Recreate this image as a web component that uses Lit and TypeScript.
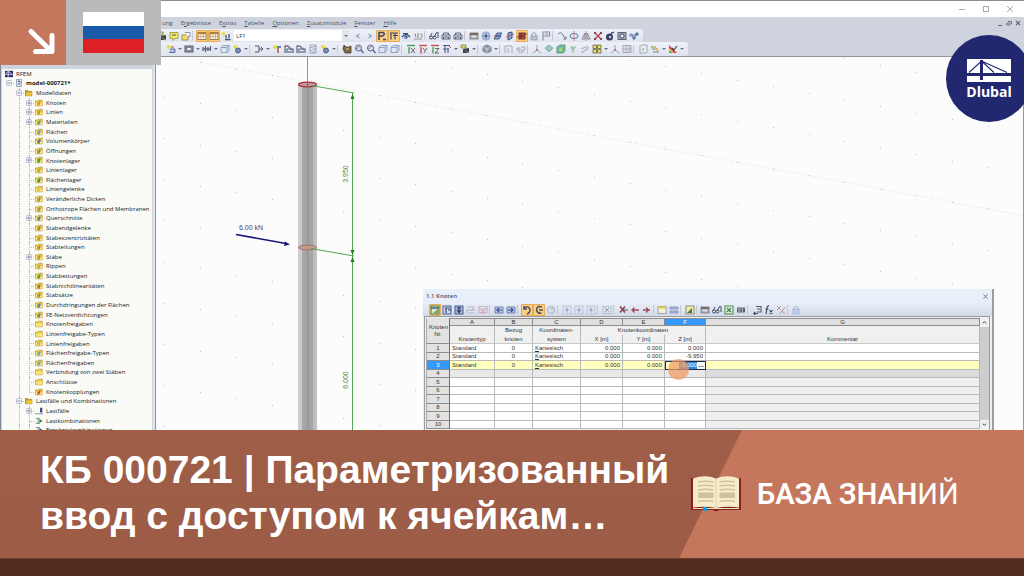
import { LitElement, html, svg, css, nothing } from "lit";
import { customElement, property } from "lit/decorators.js";
import { classMap } from "lit/directives/class-map.js";

const NAVY = "#2c3a66";

/* Glyphs are drawn on a 10 x 10 grid. */
const glyphs: Record<string, unknown> = {
  folder: svg`<path d="M.5 2.500h3l1-1h4.500v7h-8.500z" fill="#f2cf45" stroke="#9c8020" stroke-width=".7"/><path d="M1 4.500h8v3.700h-8z" fill="#fbe67c"/>`,
  folderOpen: svg`<path d="M.5 2h3l1 1h4v5.500h-8z" fill="#c9a21c" stroke="#7d6512" stroke-width=".7"/><path d="M2 4.500h7.500l-1.500 4h-7z" fill="#e8c93c"/>`,
  rfem: svg`<rect y="1" width="10" height="8" fill="#2a2f78"/><path d="M0 5.500h10M4 1v8M1 4l3-2 4 2" stroke="#fff" stroke-width=".9" fill="none"/>`,
  model: svg`<path d="M2 .5h6v9H2z" fill="#dfe6f2" stroke="#66758f" stroke-width=".8"/><path d="M3.500 3q2-1.500 2.500 0t-1 2.500v2" stroke="#22306b" fill="none"/>`,
  load: svg`<path d="M0 8.500h10" stroke="#778" /><path d="M7 1v6M8.500 1v6" stroke="${NAVY}" stroke-width="1.300"/>`,
  combo: svg`<path d="M1 2h5M1 8h5M4 2v6" stroke="#566" fill="none" stroke-width=".9"/><path d="M5.500 2.500l4 2.500-4 2.500z" fill="#1d8a3a"/>`,
  result: svg`<path d="M1 2h5M1 8h5M4 2v6" stroke="#566" fill="none" stroke-width=".9"/><path d="M5.500 2.500l4 2.500-4 2.500z" fill="#2450b0"/>`,
  open: svg`<path d="M1 4h6v5H1z" fill="#f3e05a" stroke="#7c7424" stroke-width=".8"/><path d="M4 1.500h5v4H7" fill="#fff" stroke="#667" stroke-width=".8"/>`,
  note: svg`<path d="M1 1.500h8v6H6l-2 2v-2H1z" fill="#f1e94f" stroke="#8a8430" stroke-width=".8"/><path d="M3 4h4" stroke="#444"/>`,
  table: svg`<rect x="1" y="1.500" width="8" height="7" fill="#fff" stroke="#8a6a2c" stroke-width=".9"/><path d="M1 2.500h8" stroke="#b57a20" stroke-width="1.500"/><path d="M1 5.500h8M4 3v5.500M6.500 3v5.500" stroke="#a98b55" stroke-width=".6"/>`,
  newload: svg`<path d="M4 8.500h5.500M5 7V4M8 7V3" stroke="${NAVY}" stroke-width="1.300"/><circle cx="2.500" cy="2.800" r="1.900" fill="#e6da2c"/>`,
  eye: svg`<path d="M1 6q4-5 8 0" fill="none" stroke="${NAVY}" stroke-width="1.400"/><circle cx="5" cy="6" r="1.900" fill="#3d6fb8"/><path d="M2 2.500h5" stroke="#333"/>`,
  pfoot: svg`<path d="M2 9V1.500h4.500q2 2-1 3.500H2M6 8.500h3" fill="none" stroke="#27335c" stroke-width="1.500"/>`,
  frame: svg`<path d="M1 2h8M2 2v6.500M6 2v6.500M4 4.500h5" fill="none" stroke="#27335c" stroke-width="1.200"/>`,
  values: svg`<path d="M1 4l1.500-1v3M4 3h2L4 6h2M7.500 3h1.500v3H7.500M1 8h8" fill="none" stroke="#777" stroke-width=".8"/>`,
  glasses: svg`<path d="M1 6l2-4M5 6l3-5M9 1v6" stroke="#2d3654" fill="none"/><circle cx="2" cy="6.500" r="1.500" fill="none" stroke="#2d3654"/><circle cx="5.500" cy="6.500" r="1.500" fill="none" stroke="#2d3654"/>`,
  print: svg`<path d="M1 4h8v4H1zM2.500 4V2h5v2M2.500 8V6h5v2" fill="none" stroke="#3b4668" stroke-width=".9"/>`,
  card: svg`<rect x="1" y="2" width="8" height="6" fill="#aeb2ba" stroke="#555" stroke-width=".7"/><path d="M1 3h8" stroke="#5d4632" stroke-width="1.500"/><path d="M3 5.500h4" stroke="#eee"/>`,
  target: svg`<rect x="2" y="2" width="6" height="6" fill="#c7d3ef" stroke="#6d82b8"/><path d="M5 0v10M0 5h10" stroke="#6d82b8" stroke-width=".8"/><circle cx="5" cy="5" r="1.500" fill="${NAVY}"/>`,
  plane: svg`<path d="M2 5l2-3h5L7 5zM1 8l2-3h5L6 8z" fill="#6da3da" stroke="#26406e" stroke-width=".9"/><path d="M1 6l4-4" stroke="#c33" stroke-width=".8"/>`,
  cut: svg`<path d="M3 2l4-1v6L3 9z" fill="#6da3da" stroke="#26406e"/><path d="M1 6l8-3" stroke="#b33" stroke-width=".9"/>`,
  solid: svg`<rect x="2" y="2" width="6" height="6" fill="#c5361f" stroke="#4d1c16"/><path d="M4 2v6M2 5h6M0 6h2M8 3h2" stroke="#2b1a44" stroke-width=".9"/>`,
  lock: svg`<path d="M3 5V3q2-3 4 0v2" fill="none" stroke="#8b93a8"/><rect x="2" y="5" width="6" height="4" fill="#b5bccd" stroke="#858da2" stroke-width=".7"/>`,
  flag: svg`<path d="M2 9.500V1h6.500v4H2M4 3h3" fill="none" stroke="#7b84a0" stroke-width="1.100"/>`,
  move: svg`<path d="M1 3q3-3 5 1t3 4M6.500 8H9V5.500" fill="none" stroke="#5b6684"/>`,
  rotate: svg`<ellipse cx="5" cy="5" rx="4" ry="2.600" fill="none" stroke="#4a6ca8"/><path d="M5 0v10" stroke="#c55" stroke-width=".8"/>`,
  mirror: svg`<path d="M4 2v6H1zM6 2v6h3z" fill="none" stroke="#5d6680" stroke-width=".9"/><path d="M5 0v10" stroke="#c55" stroke-width=".7"/>`,
  cross: svg`<path d="M1.500 1.500l7 7M8.500 1.500l-7 7" stroke="#b8262c" stroke-width="1.300"/><path d="M1 1h2v2H1zM7 1h2v2H7zM1 7h2v2H1zM7 7h2v2H7z" fill="#7c3040"/>`,
  ball: svg`<circle cx="4.500" cy="6" r="3.500" fill="#1f2756"/><path d="M6 3q1-2 3-1.500" stroke="#1f2756" fill="none" stroke-width="1.400"/><circle cx="5" cy="6" r="1.200" fill="#cdd5ec"/>`,
  camera: svg`<rect x="1" y="1.500" width="8" height="7" fill="#a6adb8" stroke="#4c5468"/><circle cx="5" cy="5" r="2.200" fill="#dde6f2" stroke="#222c50"/>`,
  links: svg`<path d="M2 4l3 3M5 7l3-4M2 4h6" stroke="#4c659f"/><circle cx="2" cy="4" r="1.700" fill="#6f8cc4"/><circle cx="8" cy="3" r="1.700" fill="#4c659f"/><circle cx="5" cy="7" r="1.700" fill="#4c659f"/>`,
  addnode: svg`<path d="M3 8.500h6V5H4" fill="#a9bde2" stroke="#41578c" stroke-width=".9"/><circle cx="2.600" cy="2.800" r="1.900" fill="#e6da2c"/><path d="M5 3h3" stroke="#b33"/>`,
  box: svg`<rect x="1" y="2" width="8" height="6" fill="#8e97a8" stroke="#414a62"/><rect x="3" y="3.500" width="4" height="3" fill="#fff" stroke="#414a62" stroke-width=".6"/>`,
  beam: svg`<path d="M1 3v4M3.500 2v6M6 3v4M8.500 2v5M1 5h8" stroke="#4b5674" stroke-width="1.300"/>`,
  cube: svg`<path d="M1 3.500l2-2h6v5l-2 2H1zM1 3.500h6v5M7 3.500l2-2" fill="#dce6f6" stroke="#6f84b0" stroke-width=".8"/>`,
  flow: svg`<path d="M1 2h4v6H1M5 5h4M7 3l2 2-2 2" fill="none" stroke="#3d4762"/>`,
  pin: svg`<path d="M6 2v7" stroke="#c0392b" stroke-width="1.500"/><circle cx="3" cy="3" r="2" fill="#e6da2c"/><path d="M5 2h4v2H5" fill="#5e77b0"/>`,
  truss: svg`<path d="M1 9V2h3l4 4M3 9V5h6v4M5 9V7M7 9V7" fill="none" stroke="#4b5674" stroke-width="1.200"/><path d="M1 2h3" stroke="#c55" stroke-width="1.200"/>`,
  hatch: svg`<path d="M2 1h6v8H2zM2 4l6-2M2 7l6-3M4 9l4-3" fill="none" stroke="#8793b3" stroke-width=".9"/>`,
  gear: svg`<circle cx="3" cy="3" r="2" fill="#e6da2c"/><circle cx="6" cy="6.500" r="2.500" fill="#6782b4" stroke="#344a7c"/>`,
  cat: svg`<path d="M2 1l2 2h3l2-1v7H3L1 5z" fill="#70572c" stroke="#33291c" stroke-width=".8"/><path d="M4 5h3" stroke="#dcc68d"/>`,
  zoom: svg`<circle cx="4.500" cy="4" r="3" fill="#cfe0f4" stroke="#3f5388"/><path d="M7 6l2.500 3" stroke="#3f5388" stroke-width="1.400"/><path d="M2.500 5l3-3" stroke="#c33"/>`,
  axisx: svg`<path d="M1 1.500h8" stroke="#2b9a4a" stroke-width="1.400"/><path d="M3 3v6.500" stroke="#2b9a4a" stroke-width="1.400"/><path d="M5 4l4 5M9 4L5 9" stroke="#444" stroke-width=".9"/>`,
  axisy: svg`<path d="M1 1.500h8" stroke="#c33b3b" stroke-width="1.400"/><path d="M3 3v6.500" stroke="#c33b3b" stroke-width="1.400"/><path d="M5 4l2 2.500M9 4L6 9" stroke="#444" stroke-width=".9"/>`,
  axisz: svg`<path d="M1 1.500h8" stroke="#c33b3b" stroke-width="1.400"/><path d="M3 3v6.500" stroke="#2b9a4a" stroke-width="1.400"/><path d="M5 4.500h4L5 9h4" fill="none" stroke="#444" stroke-width=".9"/>`,
  view: svg`<path d="M1 1.500h7M1 5h6M3 1.500V9M6 4v5" stroke="#3c4b80" stroke-width="1.100"/><path d="M7 2l2 2" stroke="#c33"/>`,
  ylwedge: svg`<path d="M1 1h5v3H1z" fill="#e8df38" stroke="#555" stroke-width=".7"/><path d="M3 5l6 4V4zM3 5v4h5" fill="#2a2a2a"/>`,
  sphere: svg`<path d="M5 1l4 2v4L5 9 1 7V3z" fill="#8495a4" stroke="#4c5b6b" stroke-width=".8"/><path d="M1 3l4 2 4-2M5 5v4" stroke="#d5dde4" fill="none" stroke-width=".7"/>`,
  arch: svg`<path d="M1 9V2h7v7M4 9V4" fill="none" stroke="#98a0b0"/>`,
  dims: svg`<path d="M1 4h3v2H1zM5 3h4v3H5M2 8h6" fill="none" stroke="#98a0b0"/>`,
  tripod: svg`<path d="M5 1v5M5 6L1 9M5 6l4 3" stroke="#8c97ac" fill="none"/><circle cx="5" cy="6" r="1" fill="#b55"/>`,
  surface: svg`<path d="M1 4l4-3 4 3-4 4z" fill="#78c8d4" stroke="#6685b4" stroke-width=".7"/><path d="M3 4l2-1 2 1-2 1.500z" fill="#e8b83a"/>`,
  greencube: svg`<path d="M1 3l3-2h5v6L7 9H1z" fill="#63b887" stroke="#487b70" stroke-width=".8"/><circle cx="4.500" cy="5.500" r="1.500" fill="#c8d94e"/>`,
  tree: svg`<path d="M5 9V3M2 3h6M3 5h4" stroke="#7fae8b" stroke-width="1.100"/>`,
  steps: svg`<path d="M1 8h3V6h3V4h2M1 5l7-3" fill="none" stroke="#9ba3b2"/>`,
  tiles: svg`<path d="M1 1h3.500v3.500H1zM5.500 1H9v3.500H5.500zM1 5.500h3.500V9H1zM5.500 5.500H9V9H5.500z" fill="#eadf55" stroke="#57502a" stroke-width=".8"/>`,
  grid: svg`<path d="M1 1.500h8v7H1zM1 5h8M4 1.500v7M7 1.500v7" fill="none" stroke="#8e97a8" stroke-width=".9"/>`,
  doc: svg`<path d="M2 2l2-1h5v7l-1 1H2z" fill="#e9edf4" stroke="#98a0b0"/><path d="M4 4h2v3H4z" fill="#a6c7a3"/>`,
  wand: svg`<path d="M1 3h5M2 5h6M3 8h6" stroke="#66708c"/><path d="M3 2l5 5" stroke="#dcc530" stroke-width="1.700"/>`,
  rainbow: svg`<path d="M1 1v8h8z" fill="#d8302c"/><path d="M1 4v5h5z" fill="#f0d62e"/><path d="M1 6.500V9h4z" fill="#2fa24a"/><path d="M4 4l2 2 3-4" fill="none" stroke="#222" stroke-width="1.100"/>`,
  less: svg`<path d="M6.500 3L3.500 5l3 2" fill="none" stroke="#7f90ba" stroke-width="1.100"/>`,
  more: svg`<path d="M3.500 3l3 2-3 2" fill="none" stroke="#7f90ba" stroke-width="1.100"/>`,
  picture: svg`<rect x="1" y="1" width="8" height="8" fill="#d9efcf" stroke="#2c6b3a"/><path d="M1 3h8" stroke="#2a4f8c" stroke-width="1.500"/><path d="M3 8l5-4v4z" fill="#59a851"/>`,
  insert: svg`<rect x="1" y="1" width="8" height="8" fill="#cfdcf2" stroke="#33477c"/><path d="M3 3h5M4 3v5M6 5h3" stroke="#1b2a5e" stroke-width="1.200"/>`,
  below: svg`<rect x="1" y="1" width="8" height="8" fill="#9fb4dc" stroke="#33477c"/><path d="M5 2v5M3 5l2 2.500L7 5M3 3h4" stroke="#141f4a" stroke-width="1.200" fill="none"/>`,
  dimmed: svg`<path d="M1 2h8M1 8V5h8M3 8h5" fill="none" stroke="#aeb4c8" stroke-width="1.200"/><path d="M5 6l3-3" stroke="#d6a0a8"/>`,
  dimmedx: svg`<path d="M1 1.500h8v6H1zM1 4h8" fill="none" stroke="#c9aebb" stroke-width="1.200"/><path d="M3 4l4 5M7 4L3 9" stroke="#d79aa0"/>`,
  left: svg`<path d="M1 2h8v6H1z" fill="#b4c4e4" stroke="#5a6c9c" stroke-width=".9"/><path d="M8 5H3M5 3L3 5l2 2" fill="none" stroke="#1c3a8a" stroke-width="1.200"/>`,
  right: svg`<path d="M1 2h8v6H1z" fill="#b4c4e4" stroke="#5a6c9c" stroke-width=".9"/><path d="M2 5h5M5 3l2 2-2 2" fill="none" stroke="#1c3a8a" stroke-width="1.200"/>`,
  redo: svg`<path d="M2 3q5-3 6 2 0 3-3 4M2 1v3h3" fill="none" stroke="#3a3f5c" stroke-width="1.500"/>`,
  undo: svg`<path d="M8 2Q3 0 2.500 5q1 4 5 3M5 5h4" fill="none" stroke="#3a3f5c" stroke-width="1.500"/>`,
  refresh: svg`<circle cx="5" cy="5" r="3.400" fill="none" stroke="#a9b2c4" stroke-width="1.100"/><path d="M7 1v3H4" fill="none" stroke="#a9b2c4"/>`,
  pale: svg`<rect x="1" y="1" width="8" height="8" fill="#dfe5f2" stroke="#b3bdd4" stroke-width=".9"/><path d="M5 2.500v5M3 5h4" stroke="#8f9fc6" stroke-width="1.200"/>`,
  palex: svg`<rect x="1" y="1.500" width="8" height="7" fill="#dfe4ee" stroke="#b3bacb" stroke-width=".9"/><path d="M3 3l4 4M7 3L3 7" stroke="#8b97b4"/>`,
  delx: svg`<path d="M2 1.500l5 6M7 1.500l-5 6" stroke="#8c2232" stroke-width="1.500"/><path d="M5 5h5" stroke="#444"/>`,
  delleft: svg`<path d="M9 5H2M4.500 2.500L2 5l2.500 2.500" fill="none" stroke="#9c3040" stroke-width="1.300"/>`,
  delright: svg`<path d="M1 5h7M4 2.500L6.500 5 4 7.500" fill="none" stroke="#9c3040" stroke-width="1.300"/>`,
  ytable: svg`<rect x="1" y="1.500" width="8" height="7" fill="#f8f6d2" stroke="#7c86a0" stroke-width=".8"/><path d="M1 2.500h8" stroke="#d6cc34" stroke-width="2"/>`,
  btable: svg`<path d="M1 2h8v2H1zM1 6h8v2H1z" fill="#a9b0e0" stroke="#7780b8" stroke-width=".8"/>`,
  excel: svg`<rect x="1" y="1" width="8" height="8" fill="#e4f2e0" stroke="#3d8a46" stroke-width="1.100"/><path d="M3 3l4 4M7 3L3 7" stroke="#2c7a38" stroke-width="1.300"/>`,
  calc: svg`<path d="M1 2.500h8v5H1z" fill="#4c5260"/><path d="M2 4h3M2 6h3M6.500 3v4" stroke="#dde" stroke-width=".7"/>`,
  chart: svg`<rect x="1" y="1" width="8" height="8" fill="#f3ee9a" stroke="#68705c" stroke-width=".8"/><path d="M2 8l5-5v5z" fill="#3a5a3c"/>`,
  chain: svg`<path d="M4 1.500h5V7H5M1 8.500h5M2 7l2 1.500L2 10M5 4h3" fill="none" stroke="#3f465c" stroke-width="1.100"/>`,
  fx: svg`<path d="M5 1q-1.500-.5-2 2L2 9M1.500 4h3M5.500 5l3 4M8.500 5l-3 4" fill="none" stroke="#222a44" stroke-width="1.100"/>`,
  xdel: svg`<path d="M1 1l4 4M5 1L1 5M9 2L4 9M6 6l3 3" stroke="#c08796" stroke-width="1"/>`,
  padlock: svg`<path d="M3 5V3q2-3 4 0v2" fill="none" stroke="#9fb0d4" stroke-width="1.100"/><rect x="2" y="4.500" width="6" height="4.500" fill="#c0cdea" stroke="#93a5cf" stroke-width=".7"/>`,
};

const icon = (name: string) =>
  html`<svg class="icon" viewBox="0 0 10 10" aria-hidden="true">${glyphs[name] ?? nothing}</svg>`;

/* Toolbar notation: "|" separator, "name*" active, "name+" with drop arrow. */
const MAIN_BAR_A = "ylwedge note open | table* table* newload".split(" ");
const MAIN_BAR_B =
  "less more pfoot* frame* eye values | glasses print print | card target plane cut solid* lock flag | move rotate mirror cross ball camera links".split(" ");
const VIEW_BAR =
  "addnode+ box+ beam+ cube gear+ | flow+ pin truss truss hatch gear+ | cat zoom zoom cube cube | axisx axisy axisz view+ ylwedge+ | sphere+ | arch dims | tripod surface greencube tree steps tiles+ tripod grid | doc wand+ rainbow+".split(" ");
const TABLE_BAR =
  "picture* insert below dimmed dimmedx | left right | redo* undo* refresh | pale pale pale | palex | delx delleft delright ! ytable btable | chart ! card glasses excel calc | chain fx xdel ! padlock".split(" ");

const tools = (items: string[]) =>
  items.map((item) => {
    if (item === "|") return html`<span class="sep"></span>`;
    if (item === "!") return html`<span class="sep slim"></span>`;
    const name = item.replace(/[*+]$/, "");
    return html`<button class=${classMap({ tool: true, active: item.endsWith("*"), drop: item.endsWith("+") })} aria-label=${name}>${icon(name)}</button>`;
  });

const shared = css`
  * { box-sizing: border-box; }
  button { appearance: none; border: 0; margin: 0; padding: 0; background: none; font: inherit; color: inherit; }
  .icon { display: block; width: 10px; height: 10px; flex: none; opacity: .88; }
  .tool { position: relative; width: 12px; height: 12px; display: flex; align-items: center; padding: 0 1px; flex: none; border-radius: 1px; }
  .tool.active { background: #fbcf86; box-shadow: inset 0 0 0 1px #e5ad59; }
  .tool.drop { width: 18px; }
  .tool.drop::after { content: ""; margin-left: 2px; border: 2px solid transparent; border-top-color: #6b7183; border-bottom: 0; flex: none; }
  .sep { width: 4px; height: 9px; border-left: 1px solid #c3c8d4; flex: none; }
  .sep.slim { width: 3px; }
`;

interface Row { text: string; level: number; icon: string; mark?: string; box?: "+" | "-"; last?: boolean; bold?: boolean; }
const leaf = (text: string, mark = "", box?: "+"): Row => ({ text, level: 3, icon: "folder", mark, box });
const ROWS: Row[] = [
  { text: "RFEM", level: 0, icon: "rfem" },
  { text: "model-000721*", level: 1, icon: "model", box: "-", bold: true, last: true },
  { text: "Modelldaten", level: 2, icon: "folderOpen", box: "-" },
  leaf("Knoten", "#d9822b", "+"), leaf("Linien", "#b08a1c", "+"), leaf("Materialien", "#3f8f8a", "+"),
  leaf("Flächen", "#5a86c4"), leaf("Volumenkörper", "#2c5a9e"), leaf("Öffnungen", "#6b7282"),
  leaf("Knotenlager", "#1f8c3a", "+"), leaf("Linienlager", "#b0912c"), leaf("Flächenlager", "#2c7a4a"),
  leaf("Liniengelenke", "#d8b860"), leaf("Veränderliche Dicken", "#8a7a50"), leaf("Orthotrope Flächen und Membranen", "#a08048"),
  leaf("Querschnitte", "#3f62c4", "+"), leaf("Stabendgelenke", "#a06a30"), leaf("Stabexzentrizitäten", "#a8872c"),
  leaf("Stabteilungen", "#a8702c"), leaf("Stäbe", "#a8872c", "+"), leaf("Rippen", "#b89a50"),
  leaf("Stabbettungen", "#3c8a4a"), leaf("Stabnichtlinearitäten", "#8c5a20"), leaf("Stabsätze", "#98762c"),
  leaf("Durchdringungen der Flächen", "#3c6ab0"), leaf("FE-Netzverdichtungen", "#5a6c80"), leaf("Knotenfreigaben"),
  leaf("Linienfreigabe-Typen"), leaf("Linienfreigaben", "#c4a860"), leaf("Flächenfreigabe-Typen", "#5c94cc"),
  leaf("Flächenfreigaben", "#5c94cc"), leaf("Verbindung von zwei Stäben"), leaf("Anschlüsse"),
  { ...leaf("Knotenkopplungen", "#c03a20"), last: true },
  { text: "Lastfälle und Kombinationen", level: 2, icon: "folderOpen", box: "-" },
  { text: "Lastfälle", level: 3, icon: "load", box: "+" },
  { text: "Lastkombinationen", level: 3, icon: "combo" },
  { text: "Ergebniskombinationen", level: 3, icon: "result" },
];

@customElement("project-tree")
class ProjectTree extends LitElement {
  static styles = [shared, css`
    :host { display: block; overflow: hidden; background: #fafaf7; color: #222; font: 6px/10px "Open Sans", "Noto Sans", sans-serif; }
    .list { margin: 0; padding: 0; list-style: none; display: grid; grid-auto-rows: 1fr; height: calc(100% + 5px); }
    .row { display: flex; align-items: center; padding-left: 2px; white-space: nowrap; min-height: 0; }
    .guide { align-self: stretch; width: 10px; flex: none; position: relative; display: flex; align-items: center; justify-content: center; }
    .guide.line::before { content: ""; position: absolute; left: 5px; top: 0; bottom: 0; border-left: 1px dotted #b9b9b9; }
    .guide.end::before { bottom: 50%; }
    .guide.arm::after { content: ""; position: absolute; left: 5px; right: 0; top: 50%; border-top: 1px dotted #b9b9b9; }
    .box { position: relative; z-index: 1; width: 6px; height: 6px; }
    .label { margin-left: 2px; }
    .bold { font-weight: 700; }
    .icon { width: 8px; height: 8px; margin: 0 1px; opacity: 1; }
  `];
  render() {
    return html`<ul class="list" role="tree">${ROWS.map((r) => html`
      <li class="row" role="treeitem">
        ${r.level > 1 ? html`<span class="guide"></span>` : nothing}
        ${r.level > 2 ? html`<span class="guide line"></span>` : nothing}
        ${r.level > 0 ? html`<span class=${classMap({ guide: true, line: r.level > 1, end: !!r.last, arm: true })}>
          ${r.box ? html`<svg class="box" viewBox="0 0 6 6"><rect x=".5" y=".5" width="5" height="5" rx="1" fill="#f4f5f8" stroke="#a9adb8" stroke-width=".8"/><path d=${r.box === "+" ? "M1.500 3h3M3 1.500v3" : "M1.500 3h3"} stroke="#5b6fa8" stroke-width=".8"/></svg>` : nothing}
        </span>` : nothing}
        <svg class="icon" viewBox="0 0 10 10">${glyphs[r.icon]}${r.mark ? svg`<path d="M3 4h2V3h2v3H6v2H3z" fill=${r.mark} opacity=".85"/>` : nothing}</svg>
        <span class=${classMap({ label: true, bold: !!r.bold })}>${r.text}</span>
      </li>`)}</ul>`;
  }
}

@customElement("model-view")
class ModelView extends LitElement {
  static styles = css`
    :host { display: block; background: #fcfcfc; overflow: hidden; }
    .canvas { display: block; width: 100%; height: 100%; font: 7px "Liberation Sans", Arial, sans-serif; }
  `;
  render() {
    const dots: unknown[] = [];
    for (let i = 0; i < 40; i++) {
      const x = Math.round(8.3 + i * 35.8);
      const first = (39.7 + i * 6.65) % 41.2;
      for (let k = 0; k < 12; k++) dots.push(svg`<rect x=${x} y=${Math.round(first + k * 41.2)} width="1" height="1"/>`);
    }
    return html`<svg class="canvas">
      <defs><linearGradient id="steel">
        <stop offset="0" stop-color="#cdcdcd"/><stop offset=".2" stop-color="#cbcbcb"/><stop offset=".22" stop-color="#a9a9a9"/>
        <stop offset=".48" stop-color="#a2a4a3"/><stop offset=".5" stop-color="#909694"/><stop offset=".54" stop-color="#9fa1a0"/>
        <stop offset=".8" stop-color="#a9a9a9"/><stop offset=".82" stop-color="#bcbcbc"/><stop offset="1" stop-color="#c4c4c4"/>
      </linearGradient></defs>
      <path d="M44 5L1400 258" stroke="#efefef" stroke-dasharray="5 2"/>
      <g fill="#c2c2c2">${dots}</g>
      <path d="M151.500 0v27" stroke="#69a99d"/>
      <rect x="142" y="27" width="19" height="600" fill="url(#steel)"/>
      <ellipse cx="151.500" cy="27.500" rx="9" ry="2.400" fill="#b9a3a3" stroke="#b03038" stroke-width="1.300"/>
      <circle cx="151.500" cy="27.500" r="1" fill="#d02828"/>
      <ellipse cx="151.500" cy="190.500" rx="9" ry="2.400" fill="#b5a09c" stroke="#b86a66"/>
      <circle cx="151.500" cy="190.500" r="1.200" fill="#e8883a"/>
      <g stroke="#56a856" fill="none"><path d="M155 28.500L198 36M155 191.500L198 199M196.500 36v600"/></g>
      <g fill="#17801f"><path d="M196.500 37l2 5h-4zM196.500 198l2-5h-4zM196.500 200l2 5h-4z"/></g>
      <g fill="#3f8f3f" text-anchor="middle">
        <text transform="translate(192 117) rotate(-90)">3.950</text>
        <text transform="translate(192 323) rotate(-90)">6.000</text>
      </g>
      <text x="83" y="173" fill="#45457c">6.00 kN</text>
      <path d="M80 177.500l50 9" stroke="#16167c" stroke-width="1.600"/><path d="M134 187.500l-6 1.500 1-4.500z" fill="#16167c"/>
    </svg>`;
  }
}

interface Node { z: string; x: string; y: string; }
const NODES: Node[] = [
  { x: "0.000", y: "0.000", z: "0.000" },
  { x: "0.000", y: "0.000", z: "-9.950" },
  { x: "0.000", y: "0.000", z: "-6.000" },
];

@customElement("node-table")
class NodeTable extends LitElement {
  @property({ type: Number }) current = 3;
  static styles = [shared, css`
    :host { display: flex; flex-direction: column; background: #e9eff8; border-right: 2px solid #9b9ba4; color: #333; }
    .title { display: flex; justify-content: space-between; align-items: center; height: 14px; padding: 0 3px; font: 600 6px/8px "Open Sans", "Noto Sans", sans-serif; color: #4b5265; }
    .close { width: 7px; height: 7px; }
    .bar { display: flex; align-items: center; height: 13px; padding: 0 6px; background: linear-gradient(#e9eff8, #d3dae8); }
    .sheet { display: grid; grid-template-columns: 1fr 9px; margin: 0 2px 0 1px; padding: 1px 0 1px 1px; border: 1px solid #9a9ca3; border-bottom: 0; background: #f0f0f0; }
    .data { width: 100%; table-layout: fixed; border-collapse: separate; border-spacing: 0; font: 6px/7px "Liberation Sans", Arial, sans-serif; }
    th, td { padding: 0 2px; font-weight: 400; overflow: hidden; white-space: nowrap; border-right: 1px solid #b9b9b9; }
    .c-n { width: 24px; } .c-a { width: 45px; } .c-b { width: 38px; } .c-c { width: 48px; } .c-d { width: 42px; } .c-f { width: 41px; }
    .letters th { height: 8px; background: #dfdfdf; border-right-color: #8c8c8c; border-bottom: 1px solid #8c8c8c; border-top: 1px solid #8c8c8c; line-height: 6px; }
    .letters .sel { background: #3399ff; color: #fff; }
    .heads th { height: 9px; background: #f0f0f0; }
    .heads .low { border-bottom: 1px solid #c9c9c9; }
    .letters .corner, .num { background: #e2e2e2; border: 0; border-right: 1px solid #6f6f6f; border-bottom: 1px solid #8c8c8c; text-align: center; }
    .letters .corner { line-height: 7px; white-space: normal; border-left: 1px solid #aaa; }
    .num { border-left: 1px solid #aaa; }
    td, .num { height: 8px; }
    .entry:nth-child(odd) td, .entry:nth-child(odd) .num { height: 9px; }
    td { background: #fff; border-bottom: 1px solid #b9b9b9; }
    .mid { text-align: center; } .end { text-align: right; }
    .now td { background: #ffffbe; }
    .now .num { background: #3399ff; color: #fff; }
    .next td { background: #e9e9e9; } .next .note { background: #dcdcdc; }
    .idle .note { background: #efefef; }
    .now .edit { padding: 0; border: 1px solid #22264a; vertical-align: top; }
    .cell { display: flex; justify-content: flex-end; height: 7px; }
    .value { width: 18px; height: 7px; border: 0; padding: 0; margin: 0; background: #2f86dd; color: #fff; font: inherit; line-height: 7px; text-align: right; outline: 0; flex: none; }
    .spin { width: 8px; height: 7px; background: linear-gradient(#f6f6f6 0 3px, #9da3ae 3px 4px, #f6f6f6 4px); border: 1px solid #fff; flex: none; }
    .scroll { display: flex; flex-direction: column; background: #cdcdcd; }
    .arrow { height: 9px; background: #f0f0f0; display: grid; place-items: center; }
    .arrow svg { width: 5px; height: 5px; display: block; }
    .fill { flex: 1; }
    .touch { position: absolute; left: 245px; top: 70px; width: 21px; height: 21px; border-radius: 50%; background: #ef9a62; opacity: .72; pointer-events: none; }
  `];
  private entry(n: number) {
    const node = NODES[n - 1];
    const now = n === this.current;
    return html`<tr class=${classMap({ entry: true, now, next: n === 4, idle: n > 4 })}>
      <th class="num" scope="row">${n}</th>
      <td>${node ? "Standard" : ""}</td>
      <td class="mid">${node ? "0" : ""}</td>
      <td>${node ? html`<u>K</u>artesisch` : ""}</td>
      <td class="end">${node?.x ?? ""}</td>
      <td class="end">${node?.y ?? ""}</td>
      ${now
        ? html`<td class="edit"><div class="cell"><input class="value" aria-label="Z [m]" .value=${node.z}><button class="spin" aria-label="Z"></button></div></td>`
        : html`<td class="end">${node?.z ?? ""}</td>`}
      <td class="note"></td>
    </tr>`;
  }
  render() {
    return html`
      <div class="title"><span>1.1 Knoten</span>
        <button class="close" aria-label="Schließen"><svg class="icon close" viewBox="0 0 10 10"><path d="M2 2l6 6M8 2L2 8" stroke="#4a5065" stroke-width="1.200"/></svg></button></div>
      <div class="bar">${tools(TABLE_BAR)}</div>
      <div class="sheet">
        <table class="data">
          <colgroup><col class="c-n"><col class="c-a"><col class="c-b"><col class="c-c"><col class="c-d"><col class="c-d"><col class="c-f"><col></colgroup>
          <thead>
            <tr class="letters"><th class="corner" rowspan="3">Knoten<br>Nr.</th>
              ${"ABCDEFG".split("").map((c) => html`<th class=${classMap({ sel: c === "F" })}>${c}</th>`)}</tr>
            <tr class="heads"><th></th><th>Bezug</th><th>Koordinaten-</th><th colspan="3">Knotenkoordinaten</th><th></th></tr>
            <tr class="heads">${["Knotentyp", "knoten", "system", "X [m]", "Y [m]", "Z [m]", "Kommentar"].map((t) => html`<th class="low">${t}</th>`)}</tr>
          </thead>
          <tbody>${[1, 2, 3, 4, 5, 6, 7, 8, 9, 10].map((n) => this.entry(n))}</tbody>
        </table>
        <div class="scroll">
          <button class="arrow" aria-label="Nach oben"><svg viewBox="0 0 6 6"><path d="M1 4l2-2 2 2" fill="none" stroke="#444" stroke-width="1.200"/></svg></button>
          <span class="fill"></span>
          <button class="arrow" aria-label="Nach unten"><svg viewBox="0 0 6 6"><path d="M1 2l2 2 2-2" fill="none" stroke="#444" stroke-width="1.200"/></svg></button>
        </div>
      </div>
      <span class="touch"></span>`;
  }
}

const MENU: [string, string, string][] = [
  ["", "", "ung"], ["E", "r", "gebnisse"], ["E", "x", "tras"], ["", "T", "abelle"], ["", "O", "ptionen"],
  ["", "Z", "usatzmodule"], ["", "F", "enster"], ["", "H", "ilfe"],
];

@customElement("rfem-window")
class RfemWindow extends LitElement {
  static styles = [shared, css`
    :host { display: grid; grid-template-rows: 16px 12px 28px minmax(0, 1fr); background: #cfd3de; border-top: 1px solid #8c8b92; font: 6px/10px "Open Sans", "Noto Sans", sans-serif; color: #4a5060; overflow: hidden; }
    .caption { display: flex; justify-content: flex-end; align-items: center; gap: 14px; padding-right: 9px; background: #fff; }
    .caption svg { display: block; width: 10px; height: 10px; }
    .menu { display: flex; justify-content: space-between; align-items: center; padding: 0 2px 0 162px; }
    .entries { display: flex; gap: 8px; }
    .child { display: flex; }
    .child svg { display: block; width: 9px; height: 8px; }
    .bars { display: flex; flex-direction: column; align-items: flex-start; border-bottom: 1px solid #8f939c; }
    .bar { display: flex; align-items: center; height: 13px; padding: 0 3px 0 156px; border-radius: 0 3px 3px 0; background: linear-gradient(#eef1f8, #dfe3ee); }
    .bar.view { padding-left: 165px; height: 14px; }
    .case { width: 116px; height: 11px; padding: 0 2px; margin: 0; border: 0; appearance: none; font: inherit; color: #333; background: linear-gradient(#e2e5ee, #e2e5ee) right / 8px 100% no-repeat #fff; }
    .combo { position: relative; display: flex; margin: 0 2px; }
    .combo::after { content: ""; position: absolute; right: 2px; top: 5px; border: 2px solid transparent; border-top-color: #6b7183; border-bottom: 0; }
    .body { display: grid; grid-template-columns: 156px minmax(0, 1fr); border-right: 1px solid #8b9a9a; min-height: 0; }
    .side { display: grid; padding: 12px 4px 0 2px; background: linear-gradient(90deg, #7f8a99 0 1px, #cdd4e0 1px 153px, #dfe4ec 153px 155px, #8e949f 155px); min-height: 0; }
    .work { position: relative; min-height: 0; }
    .scene { width: 100%; height: 100%; }
    .panel { position: absolute; left: 267px; right: 29px; bottom: 0; }
  `];
  render() {
    return html`
      <div class="caption">
        <button aria-label="Minimieren"><svg viewBox="0 0 10 10"><path d="M2 5.500h6" stroke="#aaa"/></svg></button>
        <button aria-label="Maximieren"><svg viewBox="0 0 10 10"><rect x="2.500" y="2.500" width="5" height="5" fill="none" stroke="#aaa"/></svg></button>
        <button aria-label="Schließen"><svg viewBox="0 0 10 10"><path d="M2 2l6 6M8 2L2 8" stroke="#aaa"/></svg></button>
      </div>
      <div class="menu">
        <nav class="entries">${MENU.map(([a, k, b]) => html`<button>${a}<u>${k}</u>${b}</button>`)}</nav>
        <div class="child">
          <button aria-label="Minimieren"><svg viewBox="0 0 9 8"><path d="M3 6.500h4" stroke="#667"/></svg></button>
          <button aria-label="Wiederherstellen"><svg viewBox="0 0 9 8"><path d="M3 6V4h3v2zM4 2.500h3.500V5" fill="none" stroke="#667" stroke-width=".9"/></svg></button>
          <button aria-label="Schließen"><svg viewBox="0 0 9 8"><path d="M3 2l4 4M7 2L3 6" stroke="#667" stroke-width="1.100"/></svg></button>
        </div>
      </div>
      <div class="bars">
        <div class="bar">${tools(MAIN_BAR_A)}
          <label class="combo"><select class="case" aria-label="Lastfall"><option>LF1</option></select></label>
          ${tools(MAIN_BAR_B)}</div>
        <div class="bar view">${tools(VIEW_BAR)}</div>
      </div>
      <div class="body">
        <div class="side"><project-tree></project-tree></div>
        <div class="work"><model-view class="scene"></model-view><node-table class="panel"></node-table></div>
      </div>`;
  }
}

@customElement("app-root")
class AppRoot extends LitElement {
  static styles = css`
    * { box-sizing: border-box; }
    :host { display: grid; grid-template-rows: minmax(0, 1fr) auto 18px; height: 100vh; overflow: hidden; font-family: "Liberation Sans", Arial, sans-serif; }
    .stage { position: relative; display: grid; min-height: 0; overflow: hidden; }
    .window { min-height: 0; }
    .badges { position: absolute; left: 0; top: 0; display: flex; height: 65px; }
    .go { width: 66px; background: #c4775d; }
    .go svg { display: block; width: 66px; height: 65px; }
    .lang { width: 95px; padding: 12px 17px; background: #bababa; }
    .tricolor { height: 41px; background: linear-gradient(#fff 0 34%, #1b5aa8 34% 67%, #dd2026 67%); }
    .brand { position: absolute; right: -8px; top: 35px; width: 86px; height: 87px; border-radius: 50%; background: #212870; color: #fff; display: flex; flex-direction: column; align-items: center; padding-top: 24px; font: 700 14px/20px "Open Sans", "Noto Sans", sans-serif; }
    .brand svg { display: block; width: 44px; height: 23px; flex: none; }
    .banner { display: grid; grid-template-columns: 679fr 345fr; min-height: 128px; background: linear-gradient(#9f5e47, #9d5c46); color: #fff; }
    .headline { margin: 0; padding: 17px 0 19px 40px; font-size: 39px; line-height: 46px; font-weight: 700; white-space: nowrap; }
    .topic { display: flex; align-items: center; gap: 16px; padding-left: 12px; background: linear-gradient(to bottom right, transparent 0 0, #c4775d 0); }
    .topic { position: relative; background: none; }
    .topic::before { content: ""; position: absolute; inset: 0; background: #c4775d; clip-path: polygon(63px 0, 100% 0, 100% 100%, 0 100%); }
    .book { position: relative; display: block; width: 50px; height: 36px; flex: none; }
    .kb { position: relative; font: 600 29px/36px Roboto, "Noto Sans", sans-serif; white-space: nowrap; }
    .thin { font-weight: 400; }
    .foot { background: #522b1f; border-top: 1px solid #6a3a2b; }
  `;
  render() {
    return html`
      <section class="stage">
        <rfem-window class="window"></rfem-window>
        <div class="badges">
          <div class="go"><svg viewBox="0 0 66 65"><path d="M31 31.500L51 51M35.500 51.500H52V35.500" fill="none" stroke="#fff" stroke-width="5" stroke-linecap="round" stroke-linejoin="round"/></svg></div>
          <div class="lang"><div class="tricolor" role="img" aria-label="Русский"></div></div>
        </div>
        <div class="brand">
          <svg viewBox="0 0 44 23"><path d="M0 0h44v14H0zM0 17h44v6H0z" fill="#fff"/><path d="M2 13.500L14.500 2 27 13.500M14.500 2L40 13.500" fill="none" stroke="#212870" stroke-width="1.100"/><path d="M14.500 1v20" stroke="#212870" stroke-width="3"/></svg>
          <span>Dlubal</span>
        </div>
      </section>
      <section class="banner">
        <h1 class="headline">КБ 000721 | Параметризованный<br>ввод с доступом к ячейкам…</h1>
        <div class="topic">
          <svg class="book" viewBox="0 0 50 36">
            <path d="M0 2h50v32H28q-3 2.500-6 0H0z" fill="#8c2019"/>
            <path d="M2 2.500Q14-2 25 2.500 36-2 48 2.500V31.500q-12-1.500-23 .500Q14 30 2 31.500z" fill="#f8ebcb"/>
            <path d="M25 3v29" stroke="#e2d2a6"/><path d="M2 32.500h46" stroke="#dfe6c4" stroke-width="1.200"/>
            <g fill="none" stroke="#cfc29c" stroke-width="1.500"><path d="M7 6q8-1.500 15.500 0M7 10q8-1.500 15.500 0M7 14q8-1.500 15.500 0M7 25.500q8-1.500 15.500 0M28.500 6q8-1.500 15.500 0M28.500 10q8-1.500 15.500 0M28.500 14q8-1.500 15.500 0M28.500 25.500q8-1.500 15.500 0"/></g>
            <path d="M7 16.500h15.500v5.500H7zM28.500 16.500H44v5.500H28.500z" fill="#cfc29c"/>
            <path d="M12 31h4v4h-4z" fill="#129bd8"/>
          </svg>
          <span class="kb">БАЗА ЗНАН<span class="thin">ИЙ</span></span>
        </div>
      </section>
      <footer class="foot"></footer>`;
  }
}
